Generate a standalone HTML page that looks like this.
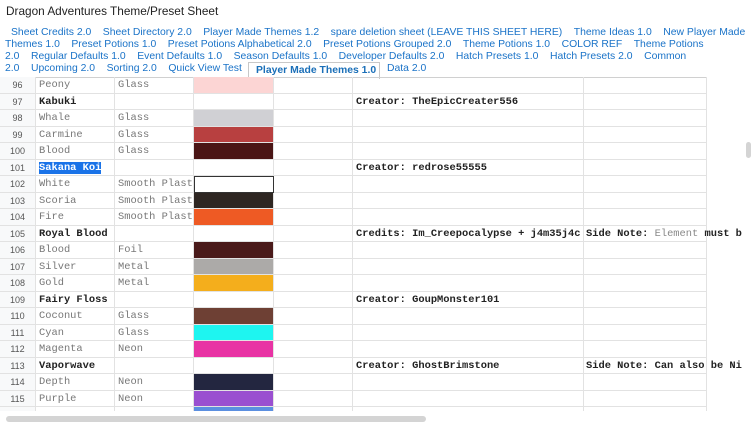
<!DOCTYPE html>
<html><head><meta charset="utf-8"><style>
*{margin:0;padding:0;box-sizing:border-box}
body{width:755px;height:425px;overflow:hidden;background:#fff;position:relative;font-family:"Liberation Sans",sans-serif}
.title{position:absolute;left:6px;top:4px;font-size:11.8px;color:#222}
.tl{position:absolute;white-space:nowrap;font-size:10.4px;color:#1a73c8;line-height:12px}
.tl span{margin-right:11.5px}
.act{position:absolute;left:248px;top:62px;width:132px;height:17px;border:1px solid #c8c8c8;border-bottom:none;background:#fff;font-size:10.4px;font-weight:bold;color:#1a6fb8;padding:2px 0 0 7px;white-space:nowrap}
.row{position:absolute;left:0;width:707px;height:16.5px;font-family:"Liberation Mono",monospace;font-size:10.4px;color:#777}
.row div{position:absolute;top:0;height:16.5px;border-right:1px solid #e2e2e2;border-bottom:1px solid #e2e2e2;line-height:16px;white-space:nowrap;overflow:hidden}
.n{left:0;width:36px;background:#f8f9fa;color:#555;font-family:"Liberation Sans",sans-serif;font-size:9px;text-align:center}
.a{left:36px;width:79px;padding-left:3px}
.b{left:115px;width:79px;padding-left:3px}
.c{left:194px;width:80px}
.d{left:274px;width:79px}
.e{left:353px;width:231px;padding-left:3px;color:#222;font-weight:bold;overflow:visible!important}
.f{left:584px;width:123px;padding-left:2px;color:#222;font-weight:bold;overflow:visible!important}
.bold{color:#222;font-weight:bold}
</style></head><body>
<div class="title">Dragon Adventures Theme/Preset Sheet</div>
<div class="tl" style="left:11px;top:27px"><span>Sheet Credits 2.0</span><span>Sheet Directory 2.0</span><span>Player Made Themes 1.2</span><span>spare deletion sheet (LEAVE THIS SHEET HERE)</span><span>Theme Ideas 1.0</span><span>New Player Made</span></div>
<div class="tl" style="left:5px;top:39px"><span>Themes 1.0</span><span>Preset Potions 1.0</span><span>Preset Potions Alphabetical 2.0</span><span>Preset Potions Grouped 2.0</span><span>Theme Potions 1.0</span><span>COLOR REF</span><span>Theme Potions</span></div>
<div class="tl" style="left:5px;top:51px"><span>2.0</span><span>Regular Defaults 1.0</span><span>Event Defaults 1.0</span><span>Season Defaults 1.0</span><span>Developer Defaults 2.0</span><span>Hatch Presets 1.0</span><span>Hatch Presets 2.0</span><span>Common</span></div>
<div class="tl" style="left:5px;top:63px"><span>2.0</span><span>Upcoming 2.0</span><span>Sorting 2.0</span><span>Quick View Test</span></div>
<div class="act">Player Made Themes 1.0</div>
<div class="tl" style="left:387px;top:63px"><span>Data 2.0</span></div>
<div style="position:absolute;left:0;top:77px;width:707px;height:1px;background:#d0d0d0"></div>

<div class="row" style="top:77px"><div class="n">96</div><div class="a">Peony</div><div class="b">Glass</div><div class="c" style="background:#fcd5d4"></div><div class="d"></div><div class="e"></div><div class="f"></div></div>
<div class="row" style="top:93.5px"><div class="n">97</div><div class="a bold">Kabuki</div><div class="b"></div><div class="c"></div><div class="d"></div><div class="e">Creator: TheEpicCreater556</div><div class="f"></div></div>
<div class="row" style="top:110px"><div class="n">98</div><div class="a">Whale</div><div class="b">Glass</div><div class="c" style="background:#d0d0d4"></div><div class="d"></div><div class="e"></div><div class="f"></div></div>
<div class="row" style="top:126.5px"><div class="n">99</div><div class="a">Carmine</div><div class="b">Glass</div><div class="c" style="background:#b84040"></div><div class="d"></div><div class="e"></div><div class="f"></div></div>
<div class="row" style="top:143px"><div class="n">100</div><div class="a">Blood</div><div class="b">Glass</div><div class="c" style="background:#4a1515"></div><div class="d"></div><div class="e"></div><div class="f"></div></div>
<div class="row" style="top:159.5px"><div class="n">101</div><div class="a bold"><span style="background:#1a73e8;color:#fff">Sakana Koi</span></div><div class="b"></div><div class="c"></div><div class="d"></div><div class="e">Creator: redrose55555</div><div class="f"></div></div>
<div class="row" style="top:176px"><div class="n">102</div><div class="a">White</div><div class="b">Smooth Plast</div><div class="c" style="background:#fff;border:1px solid #333"></div><div class="d"></div><div class="e"></div><div class="f"></div></div>
<div class="row" style="top:192.5px"><div class="n">103</div><div class="a">Scoria</div><div class="b">Smooth Plast</div><div class="c" style="background:#2e2622"></div><div class="d"></div><div class="e"></div><div class="f"></div></div>
<div class="row" style="top:209px"><div class="n">104</div><div class="a">Fire</div><div class="b">Smooth Plast</div><div class="c" style="background:#ee5a24"></div><div class="d"></div><div class="e"></div><div class="f"></div></div>
<div class="row" style="top:225.5px"><div class="n">105</div><div class="a bold">Royal Blood</div><div class="b"></div><div class="c"></div><div class="d"></div><div class="e">Credits: Im_Creepocalypse + j4m35j4c</div><div class="f" style="background:#fff">Side Note: <span style="font-weight:normal;color:#888">Element</span> must b</div></div>
<div class="row" style="top:242px"><div class="n">106</div><div class="a">Blood</div><div class="b">Foil</div><div class="c" style="background:#4a1a1a"></div><div class="d"></div><div class="e"></div><div class="f"></div></div>
<div class="row" style="top:258.5px"><div class="n">107</div><div class="a">Silver</div><div class="b">Metal</div><div class="c" style="background:#acaaa8"></div><div class="d"></div><div class="e"></div><div class="f"></div></div>
<div class="row" style="top:275px"><div class="n">108</div><div class="a">Gold</div><div class="b">Metal</div><div class="c" style="background:#f4ae1c"></div><div class="d"></div><div class="e"></div><div class="f"></div></div>
<div class="row" style="top:291.5px"><div class="n">109</div><div class="a bold">Fairy Floss</div><div class="b"></div><div class="c"></div><div class="d"></div><div class="e">Creator: GoupMonster101</div><div class="f"></div></div>
<div class="row" style="top:308px"><div class="n">110</div><div class="a">Coconut</div><div class="b">Glass</div><div class="c" style="background:#6e4034"></div><div class="d"></div><div class="e"></div><div class="f"></div></div>
<div class="row" style="top:324.5px"><div class="n">111</div><div class="a">Cyan</div><div class="b">Glass</div><div class="c" style="background:#1ef5f0"></div><div class="d"></div><div class="e"></div><div class="f"></div></div>
<div class="row" style="top:341px"><div class="n">112</div><div class="a">Magenta</div><div class="b">Neon</div><div class="c" style="background:#e833a4"></div><div class="d"></div><div class="e"></div><div class="f"></div></div>
<div class="row" style="top:357.5px"><div class="n">113</div><div class="a bold">Vaporwave</div><div class="b"></div><div class="c"></div><div class="d"></div><div class="e">Creator: GhostBrimstone</div><div class="f" style="background:#fff">Side Note: Can also be Ni</div></div>
<div class="row" style="top:374px"><div class="n">114</div><div class="a">Depth</div><div class="b">Neon</div><div class="c" style="background:#232640"></div><div class="d"></div><div class="e"></div><div class="f"></div></div>
<div class="row" style="top:390.5px"><div class="n">115</div><div class="a">Purple</div><div class="b">Neon</div><div class="c" style="background:#9a4fd0"></div><div class="d"></div><div class="e"></div><div class="f"></div></div>
<div class="row" style="top:407px;height:4px;overflow:hidden"><div class="n"></div><div class="a"></div><div class="b"></div><div class="c" style="background:#5b8fe0"></div><div class="d"></div><div class="e"></div><div class="f"></div></div>
<div style="position:absolute;left:0;top:411px;width:755px;height:14px;background:#fff"></div>
<div style="position:absolute;left:6px;top:416px;width:420px;height:6px;border-radius:3px;background:#d4d4d4"></div>
<div style="position:absolute;left:746px;top:142px;width:5px;height:16px;border-radius:3px;background:#d4d4d4"></div>
</body></html>
